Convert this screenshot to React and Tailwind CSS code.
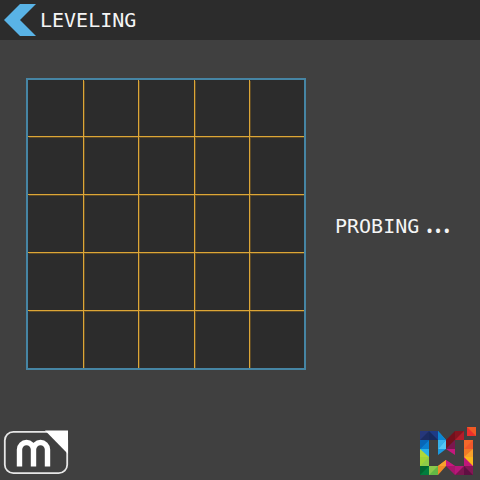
const COLUMNS = 5;
const ROWS = 5;

function MeshGrid() {
  const cells = Array.from({ length: COLUMNS * ROWS }, (_, i) => i);
  return (
    <div className="grid w-[280px] shrink-0 grid-cols-[56px_55px_56px_55px_54px] grid-rows-[57px_58px_58px_58px_57px] border-2 border-[#4685a4] bg-[#2c2c2c]">
      {cells.map((i) => {
        const hasRight = i % COLUMNS < COLUMNS - 1;
        const hasBottom = i < COLUMNS * (ROWS - 1);
        const right = hasRight ? "border-r" : "";
        const bottom = hasBottom ? "border-b" : "";
        const glow = hasRight
          ? hasBottom
            ? "shadow-[1px_1px_0_#5e4a25]"
            : "shadow-[1px_0_0_#5e4a25]"
          : hasBottom
            ? "shadow-[0_1px_0_#5e4a25]"
            : "";
        return <div key={i} className={`border-[#dca637] ${right} ${bottom} ${glow}`} />;
      })}
    </div>
  );
}

function MarlinLogo() {
  return (
    <svg width="66" height="46" viewBox="0 0 66 46" fill="none" role="img" aria-label="Marlin">
      <rect x="1.8" y="1.8" width="62.4" height="41.4" rx="8.5" stroke="#e6e6e6" strokeWidth="1.8" />
      <path d="M42 .5H65V24Z" fill="#fff" />
      <path d="M16.5 36.5V19.5a7 7 0 0 1 14 0V36.5M30.5 19.5a7 7 0 0 1 14 0V36.5" stroke="#fff" strokeWidth="5.4" />
    </svg>
  );
}

const FACETS = [
  // upper left arm
  ["0,4 9,4 9,13 0,13", "#1c2c62"], ["0,4 9,4 0,13", "#26377a"],
  ["9,4 18,4 18,13 9,13", "#1e3b86"], ["9,4 18,13 9,13", "#172a5e"],
  // left stem
  ["0,13 9,13 9,22 0,22", "#0550a0"], ["0,13 9,13 0,22", "#0766b8"],
  ["0,22 9,13 9,22", "#0a7fd0"],
  ["0,22 9,22 9,30 0,30", "#27b0ea"], ["0,22 9,30 0,30", "#aed838"],
  ["0,30 9,30 9,39 0,39", "#8ccb48"], ["0,30 9,30 0,39", "#9fd436"],
  ["0,39 9,39 9,48 0,48", "#007d3d"], ["0,39 9,39 0,48", "#00652f"],
  ["9,39 18,39 18,48 9,48", "#62b845"], ["9,39 18,39 9,48", "#8cc84b"],
  // blue diagonal
  ["18,4 26,13 26,22 18,28", "#1b9ae0"], ["18,4 26,13 18,13", "#0b86d2"],
  ["18,22 26,13 26,22", "#55c6f4"], ["18,13 26,13 18,22", "#39b2ea"],
  // red and magenta diagonal
  ["26,13 35,4 35,13 26,22", "#74101c"], ["35,4 44,4 44,13 35,13", "#b31c2a"],
  ["35,4 44,4 35,13", "#861420"], ["26,22 35,13 35,22", "#7b164f"],
  ["26,22 35,22 35,28", "#c4187c"],
  // lower centre
  ["18,39 26,33 26,39 18,48", "#f08a26"], ["18,39 26,33 26,39", "#f7a02c"],
  ["26,33 35,39 35,48 26,39", "#a8156c"], ["26,33 35,39 26,39", "#c8187f"],
  ["35,39 44,39 44,48 35,48", "#7b164f"], ["35,39 44,39 35,48", "#b8167a"],
  ["44,39 53,39 53,48 44,48", "#5f0f42"], ["44,39 53,39 53,48", "#851655"],
  // right stem
  ["44,13 53,13 53,22 44,22", "#f2582a"], ["44,13 53,13 44,22", "#f5682a"],
  ["44,22 53,22 53,30 44,30", "#f07a26"], ["44,30 53,22 53,30", "#f9a02c"],
  ["44,30 53,30 53,39 44,39", "#fbb81c"], ["44,30 53,39 44,39", "#c0177a"],
  // dot
  ["47,0 56,0 56,9 47,9", "#f15a24"], ["47,0 56,9 47,9", "#ea2f2c"],
];

function VendorLogo() {
  return (
    <svg width="57" height="49" viewBox="0 0 57 49" role="img" aria-label="Vendor logo">
      {FACETS.map(([points, fill], i) => (
        <polygon key={i} points={points} fill={fill} />
      ))}
    </svg>
  );
}

export default function App() {
  return (
    <div className="flex min-h-screen flex-col bg-[#404040] font-['DejaVu_Sans_Mono',monospace] text-xl text-[#f5f5f5]">
      <header className="flex h-10 items-center bg-[#2c2c2c] pl-1">
        <button type="button" aria-label="Back" className="mr-1">
          <svg width="32" height="32" viewBox="0 0 32 32" className="block">
            <path d="M0 16 16 0H32L16 16 32 32H16Z" fill="#59b3e6" />
          </svg>
        </button>
        <h1>LEVELING</h1>
      </header>
      <main className="flex items-center pt-[38px] pl-[26px]">
        <MeshGrid />
        <p className="flex flex-1 items-baseline justify-center pb-1" role="status">
          PROBING
          <span className="ml-1.5 font-['Noto_Sans',sans-serif] text-[32px] leading-8">...</span>
        </p>
      </main>
      <footer className="mt-auto flex items-end justify-between px-[3px] pb-1">
        <MarlinLogo />
        <VendorLogo />
      </footer>
    </div>
  );
}
